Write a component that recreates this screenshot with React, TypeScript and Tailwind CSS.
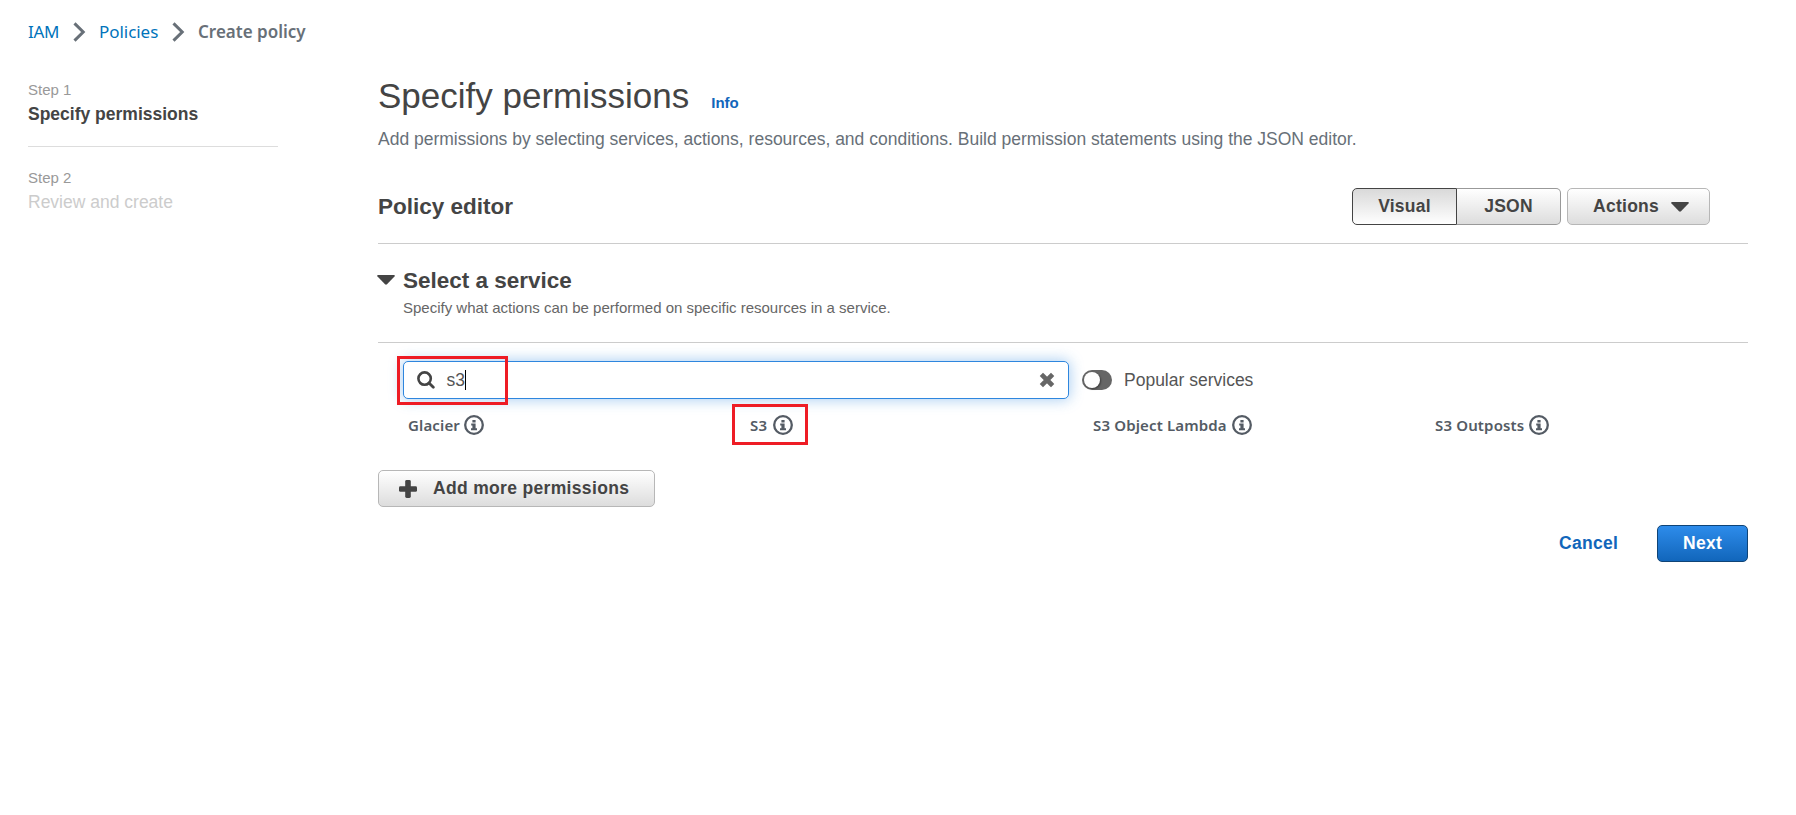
import type { ReactNode } from "react";

const ember = "font-['Noto_Sans',sans-serif]";

function Chevron() {
  return (
    <svg className="block h-[20px] w-[13px]" viewBox="0 0 13 20" fill="none" stroke="#687078" strokeWidth="3">
      <path d="M1.5 1.4 L10.2 10 L1.5 18.6" strokeLinejoin="miter" />
    </svg>
  );
}

function Caret({ className }: { className: string }) {
  return (
    <svg className={className} viewBox="0 0 18 10" fill="#444">
      <path d="M1 0 H17 Q18.3 0.4 17.5 1.5 L10 9.3 Q9 10.2 8 9.3 L0.5 1.5 Q-0.3 0.4 1 0 Z" />
    </svg>
  );
}

function InfoIcon() {
  return (
    <svg className="block size-[20px] shrink-0" viewBox="0 0 20 20">
      <circle cx="10" cy="10" r="8.8" fill="none" stroke="#545b64" strokeWidth="2.3" />
      <path d="M8.4 4.9h3.2v2.5H8.4z M7.2 8.5h4.4v4.8h1.4v1.9H7v-1.9h1.4v-2.9H7.2z" fill="#545b64" />
    </svg>
  );
}

function Service({ name, width, marked = false }: { name: string; width: string; marked?: boolean }) {
  return (
    <div className="relative flex h-5 items-center">
      <span className={`${ember} ${width} text-[15px] leading-5 font-semibold tracking-[0.15px] whitespace-nowrap text-[#545b64]`}>
        {name}
      </span>
      <InfoIcon />
      {marked && <div className="absolute -top-[11px] -left-[18px] h-[41px] w-[76px] border-3 border-[#ee1c25]" />}
    </div>
  );
}

function Step({ label, children }: { label: string; children: ReactNode }) {
  return (
    <div className="flex flex-col gap-0.5">
      <span className="text-[15px] leading-5 text-[#999]">{label}</span>
      {children}
    </div>
  );
}

export default function App() {
  return (
    <div className="min-h-[815px] w-[1796px] bg-white font-['Liberation_Sans',Arial,sans-serif] text-[17.5px] text-[#444]">
      <nav className={`${ember} flex h-16 items-center pl-7`}>
        <a className="w-[45px] text-[17px] tracking-[-0.3px] text-[#0073bb]">IAM</a>
        <Chevron />
        <a className="ml-[13px] w-[73px] text-[17px] tracking-[-0.05px] text-[#0073bb]">Policies</a>
        <Chevron />
        <span className="ml-[13px] text-[17px] font-semibold text-[#687078]">Create policy</span>
      </nav>

      <div className="flex">
        <aside className="ml-7 w-[250px] pt-4">
          <div className="border-b border-[#ddd] pb-5">
            <Step label="Step 1">
              <span className="leading-6 font-bold text-[#444]">Specify permissions</span>
            </Step>
          </div>
          <div className="pt-[21px]">
            <Step label="Step 2">
              <span className="leading-6 text-[#ccc]">Review and create</span>
            </Step>
          </div>
        </aside>

        <main className="ml-[100px] w-[1370px] pt-2.5">
          <div className="flex items-baseline">
            <h1 className="text-[35px] leading-[44px]">Specify permissions</h1>
            <a className="ml-[22px] text-[15px] font-bold text-[#1166bb]">Info</a>
          </div>
          <p className="mt-[9px] leading-6 text-[#687078]">
            Add permissions by selecting services, actions, resources, and conditions. Build permission statements using the JSON editor.
          </p>

          <div className="mt-[37px] flex items-center border-b border-[#ccc] pr-[38px] pb-[18px]">
            <h2 className="text-[22.5px] leading-7 font-bold">Policy editor</h2>
            <div className="ml-auto flex font-bold">
              <button className="h-[37px] w-[105px] rounded-l-[5px] border border-[#444] bg-linear-to-b from-[#d9d9d9] to-white tracking-[0.25px]">
                Visual
              </button>
              <button className="h-[37px] w-[104px] rounded-r-[5px] border border-l-0 border-[#999] bg-linear-to-b from-white to-[#ddd] tracking-[0.25px]">
                JSON
              </button>
            </div>
            <button className="ml-1.5 flex h-[37px] w-[143px] items-center rounded-[5px] border border-[#b7b7b7] bg-linear-to-b from-white to-[#ddd] pl-[25px] font-bold tracking-[0.27px]">
              Actions
              <Caret className="ml-3 h-[10px] w-[18px]" />
            </button>
          </div>

          <div className="flex border-b border-[#ccc] pt-[22px] pb-6">
            <Caret className="-ml-px mt-[9px] h-[10px] w-[18px]" />
            <div className="ml-2">
              <h2 className="mt-px text-[22.5px] leading-7 font-bold">Select a service</h2>
              <p className="mt-[3px] text-[15px] leading-5 text-[#666]">
                Specify what actions can be performed on specific resources in a service.
              </p>
            </div>
          </div>

          <div className="mt-[18px] flex items-center pl-[25px]">
            <div className="relative flex h-[38px] w-[666px] items-center rounded-[5px] border border-[#2e86de] bg-white pr-[13px] pl-[13px] shadow-[0_0_14px_1px_rgba(46,134,222,0.4)]">
              <svg className="block size-[18px]" viewBox="0 0 18 18" fill="none" stroke="#444">
                <circle cx="7.6" cy="7.6" r="6.2" strokeWidth="2.6" />
                <path d="M12 12 L16.3 16.3" strokeWidth="2.8" strokeLinecap="round" />
              </svg>
              <span className="ml-[11.5px] text-[#555]">s3</span>
              <span className="h-5 w-px bg-black" />
              <svg className="ml-auto block size-4" viewBox="0 0 16 16" stroke="#666" strokeWidth="4.6" strokeLinecap="square">
                <path d="M4 4 L12 12 M12 4 L4 12" />
              </svg>
              <div className="absolute -top-1.5 -left-[7px] h-[49px] w-[111px] border-3 border-[#ee1c25]" />
            </div>
            <div className="ml-[13px] flex h-5 w-[30px] items-center rounded-full bg-[#666] pl-[1.5px]">
              <div className="size-4 rounded-full bg-white shadow-[1px_1px_2px_rgba(0,0,0,0.4)]" />
            </div>
            <span className="ml-3 text-[#555]">Popular services</span>
          </div>

          <div className="mt-4 grid grid-cols-[342px_343px_342px_1fr] pl-[30px]">
            <Service name="Glacier" width="w-[56px]" />
            <Service name="S3" width="w-[23px]" marked />
            <Service name="S3 Object Lambda" width="w-[139px]" />
            <Service name="S3 Outposts" width="w-[94px]" />
          </div>

          <button className="mt-[35px] flex h-[37px] w-[277px] items-center rounded-[5px] border border-[#b7b7b7] bg-linear-to-b from-white to-[#ddd] pl-5 font-bold">
            <svg className="block size-[18px]" viewBox="0 0 18 18" fill="#444">
              <rect x="6.2" y="0" width="5.6" height="18" rx="1.4" />
              <rect x="0" y="6.2" width="18" height="5.6" rx="1.4" />
            </svg>
            <span className="ml-4 tracking-[0.33px]">Add more permissions</span>
          </button>

          <div className="mt-[18px] flex items-center justify-end font-bold tracking-[0.25px]">
            <a className="text-[#1166bb]">Cancel</a>
            <button className="ml-[39px] h-[37px] w-[91px] rounded-[5px] border border-[#0f4477] bg-linear-to-b from-[#2d8ceb] to-[#1166bb] tracking-[0.25px] text-white">
              Next
            </button>
          </div>
        </main>
      </div>
    </div>
  );
}
